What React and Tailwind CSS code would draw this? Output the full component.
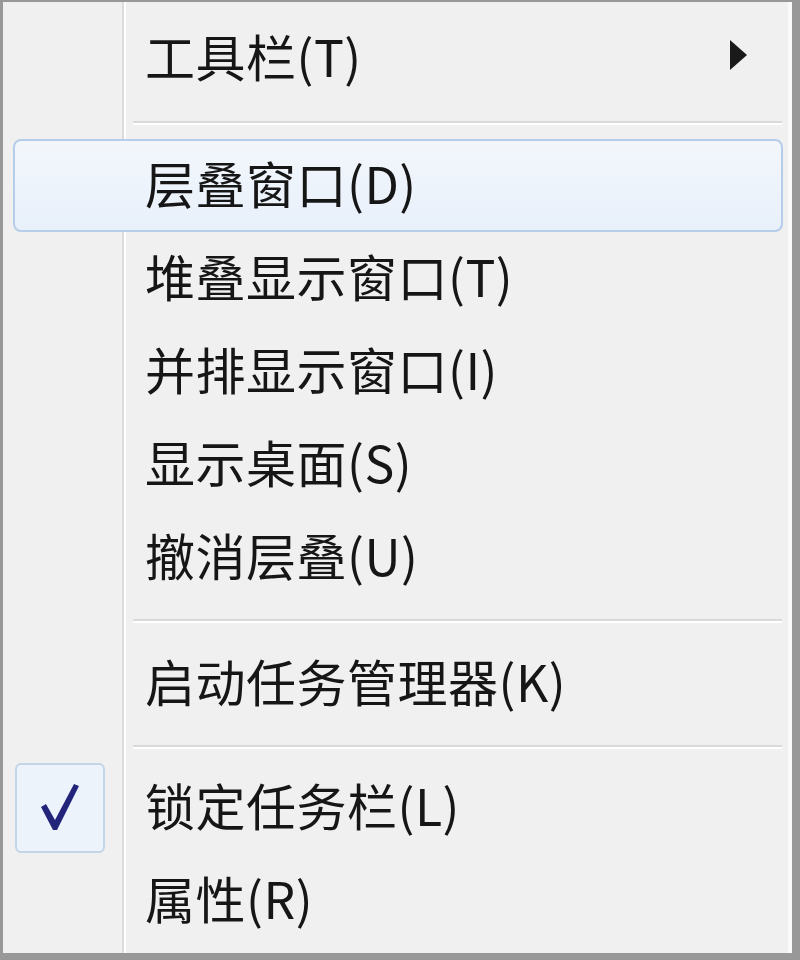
import { Fragment } from 'react'

const GROUPS = [
  [{ label: '工具栏(T)', submenu: true }],
  [
    { label: '层叠窗口(D)', active: true },
    { label: '堆叠显示窗口(T)' },
    { label: '并排显示窗口(I)' },
    { label: '显示桌面(S)' },
    { label: '撤消层叠(U)' },
  ],
  [{ label: '启动任务管理器(K)' }],
  [{ label: '锁定任务栏(L)', checked: true }, { label: '属性(R)' }],
]

function Check() {
  return (
    <svg width="40" height="50" viewBox="0 0 40 50">
      <path d="M1 24 L6 21 L15 37 L34 1 L39 3 L17 47 L13 47 Z" fill="#22247a" />
    </svg>
  )
}

function Arrow() {
  return (
    <svg width="18" height="30" viewBox="0 0 18 30">
      <path d="M1 0 L18 15 L1 30 Z" fill="#1a1a1a" />
    </svg>
  )
}

function Item({ item }) {
  return (
    <div
      className={`ml-[10px] mr-[5px] h-[93px] flex items-center rounded-[8px] border-2 ${
        item.active
          ? 'border-[#b6cde9] bg-[linear-gradient(to_bottom,#f3f7fc,#e8f0fa)]'
          : 'border-transparent'
      }`}
    >
      <div className="w-[90px] h-full flex items-center justify-start">
        {item.checked && (
          <div className="w-[90px] h-[90px] rounded-[6px] border-2 border-[#c4d5ea] bg-[#edf3fb] flex items-center justify-center">
            <Check />
          </div>
        )}
      </div>
      <div className="flex-1 h-full pl-[40px] pr-[34px] pb-[8px] flex items-center justify-between">
        <span className="text-[50px] leading-none text-[#161616] tracking-[0.5px]">{item.label}</span>
        {item.submenu && <Arrow />}
      </div>
    </div>
  )
}

function Separator({ h, line }) {
  return (
    <div className="pl-[130px] pr-[6px] flex flex-col" style={{ height: h }}>
      <div style={{ height: line }} />
      <div className="h-[2px] bg-[#d9d9d9]" />
      <div className="h-[2px] bg-white" />
    </div>
  )
}

export default function App() {
  return (
    <div
      className="w-[800px] h-[960px] bg-[#989898] pt-[2px] pl-[3px] pr-[8px] pb-[7px]"
      style={{ fontFamily: '"Noto Sans CJK SC", "Noto Sans", sans-serif' }}
    >
      <div className="w-full h-full bg-[#f0f0f0] border-r-[4px] border-[#fafafa] pt-[10px] bg-[linear-gradient(to_right,transparent_119px,#dcdcdc_119px,#dcdcdc_121px,#ffffff_121px,#ffffff_123px,transparent_123px)]">
        {GROUPS.map((group, gi) => (
          <Fragment key={gi}>
            {gi === 1 && <Separator h={34} line={16} />}
            {gi === 2 && <Separator h={33} line={15} />}
            {gi === 3 && <Separator h={31} line={15} />}
            {group.map(item => <Item key={item.label} item={item} />)}
          </Fragment>
        ))}
      </div>
    </div>
  )
}
